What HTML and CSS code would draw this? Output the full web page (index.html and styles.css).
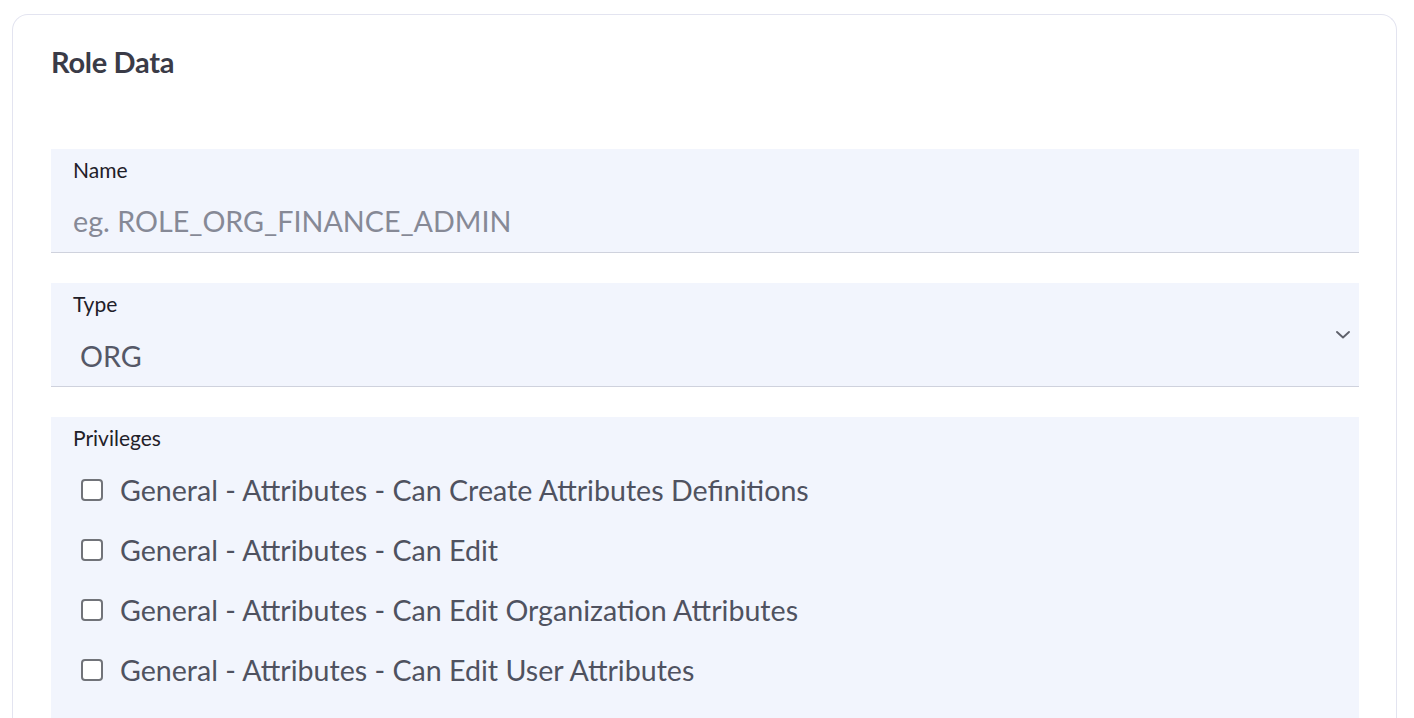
FILE: index.html
```html
<!DOCTYPE html>
<html>
<head>
<meta charset="utf-8">
<link rel="stylesheet" href="styles.css">
</head>
<body>
<div class="page">
  <section class="card">
    <h2 class="card-title">Role Data</h2>
    <div class="fields">
      <label class="field">
        <span class="field-label">Name</span>
        <input class="field-input" type="text" placeholder="eg. ROLE_ORG_FINANCE_ADMIN">
      </label>
      <div class="field field-select">
        <span class="field-label">Type</span>
        <div class="select-row">
          <span class="select-value">ORG</span>
          <svg class="chevron" width="16" height="10" viewBox="0 0 16 10"><path d="M2 2 L8 7.5 L14 2" fill="none" stroke="#5f616b" stroke-width="1.9" stroke-linecap="round" stroke-linejoin="round"/></svg>
        </div>
      </div>
      <div class="field field-list">
        <span class="field-label">Privileges</span>
        <ul class="checks">
          <li class="check"><span class="box"></span><span class="check-text">General - Attributes - Can Create Attributes Definitions</span></li>
          <li class="check"><span class="box"></span><span class="check-text">General - Attributes - Can Edit</span></li>
          <li class="check"><span class="box"></span><span class="check-text">General - Attributes - Can Edit Organization Attributes</span></li>
          <li class="check"><span class="box"></span><span class="check-text">General - Attributes - Can Edit User Attributes</span></li>
        </ul>
      </div>
    </div>
  </section>
</div>
</body>
</html>
```
FILE: styles.css
```css
* { box-sizing: border-box; }
html, body { margin: 0; padding: 0; background: #ffffff; }
body { font-family: "Lato", "Open Sans", sans-serif; color: #3b3c48; overflow: hidden; }
.page { padding: 14px 17px 0 12px; }
.card {
  border: 1px solid #e3e4f0;
  border-bottom: none;
  border-radius: 16px 16px 0 0;
  padding: 28px 37px 0 38px;
  height: 720px;
}
.card-title {
  margin: 0;
  font-size: 29px;
  font-weight: 700;
  color: #3a3b47;
  letter-spacing: -0.3px;
  line-height: 38px;
}
.fields { margin-top: 68px; display: flex; flex-direction: column; gap: 30px; }
.field {
  display: flex;
  flex-direction: column;
  background: #f2f5fd;
  border-bottom: 1px solid #cfd2dd;
  padding: 8px 22px 0 22px;
  height: 104px;
}
.field-label { font-size: 21px; color: #1f2029; line-height: 26px; }
.field-input {
  border: none;
  background: transparent;
  font-family: inherit;
  font-size: 28.7px;
  padding: 0;
  margin-top: 18px;
  height: 40px;
  color: #3b3c48;
  outline: none;
}
.field-input::placeholder { color: #868996; }
.select-row { display: flex; align-items: center; justify-content: space-between; margin-top: 13px; padding-left: 7px; margin-right: -14px; }
.select-value { font-size: 28.7px; color: #555867; line-height: 52px; }
.chevron { margin-top: -42px; }
.field-list { height: 320px; border-bottom: none; }
.checks { list-style: none; margin: 19px 0 0 0; padding: 0 0 0 8px; display: flex; flex-direction: column; gap: 20px; }
.check { display: flex; align-items: center; gap: 17px; height: 40px; }
.box {
  width: 22px; height: 22px;
  border: 2px solid #717379;
  border-radius: 4px;
  background: #ffffff;
  flex: none;
}
.check-text { font-size: 28.6px; color: #4f5260; }
```
